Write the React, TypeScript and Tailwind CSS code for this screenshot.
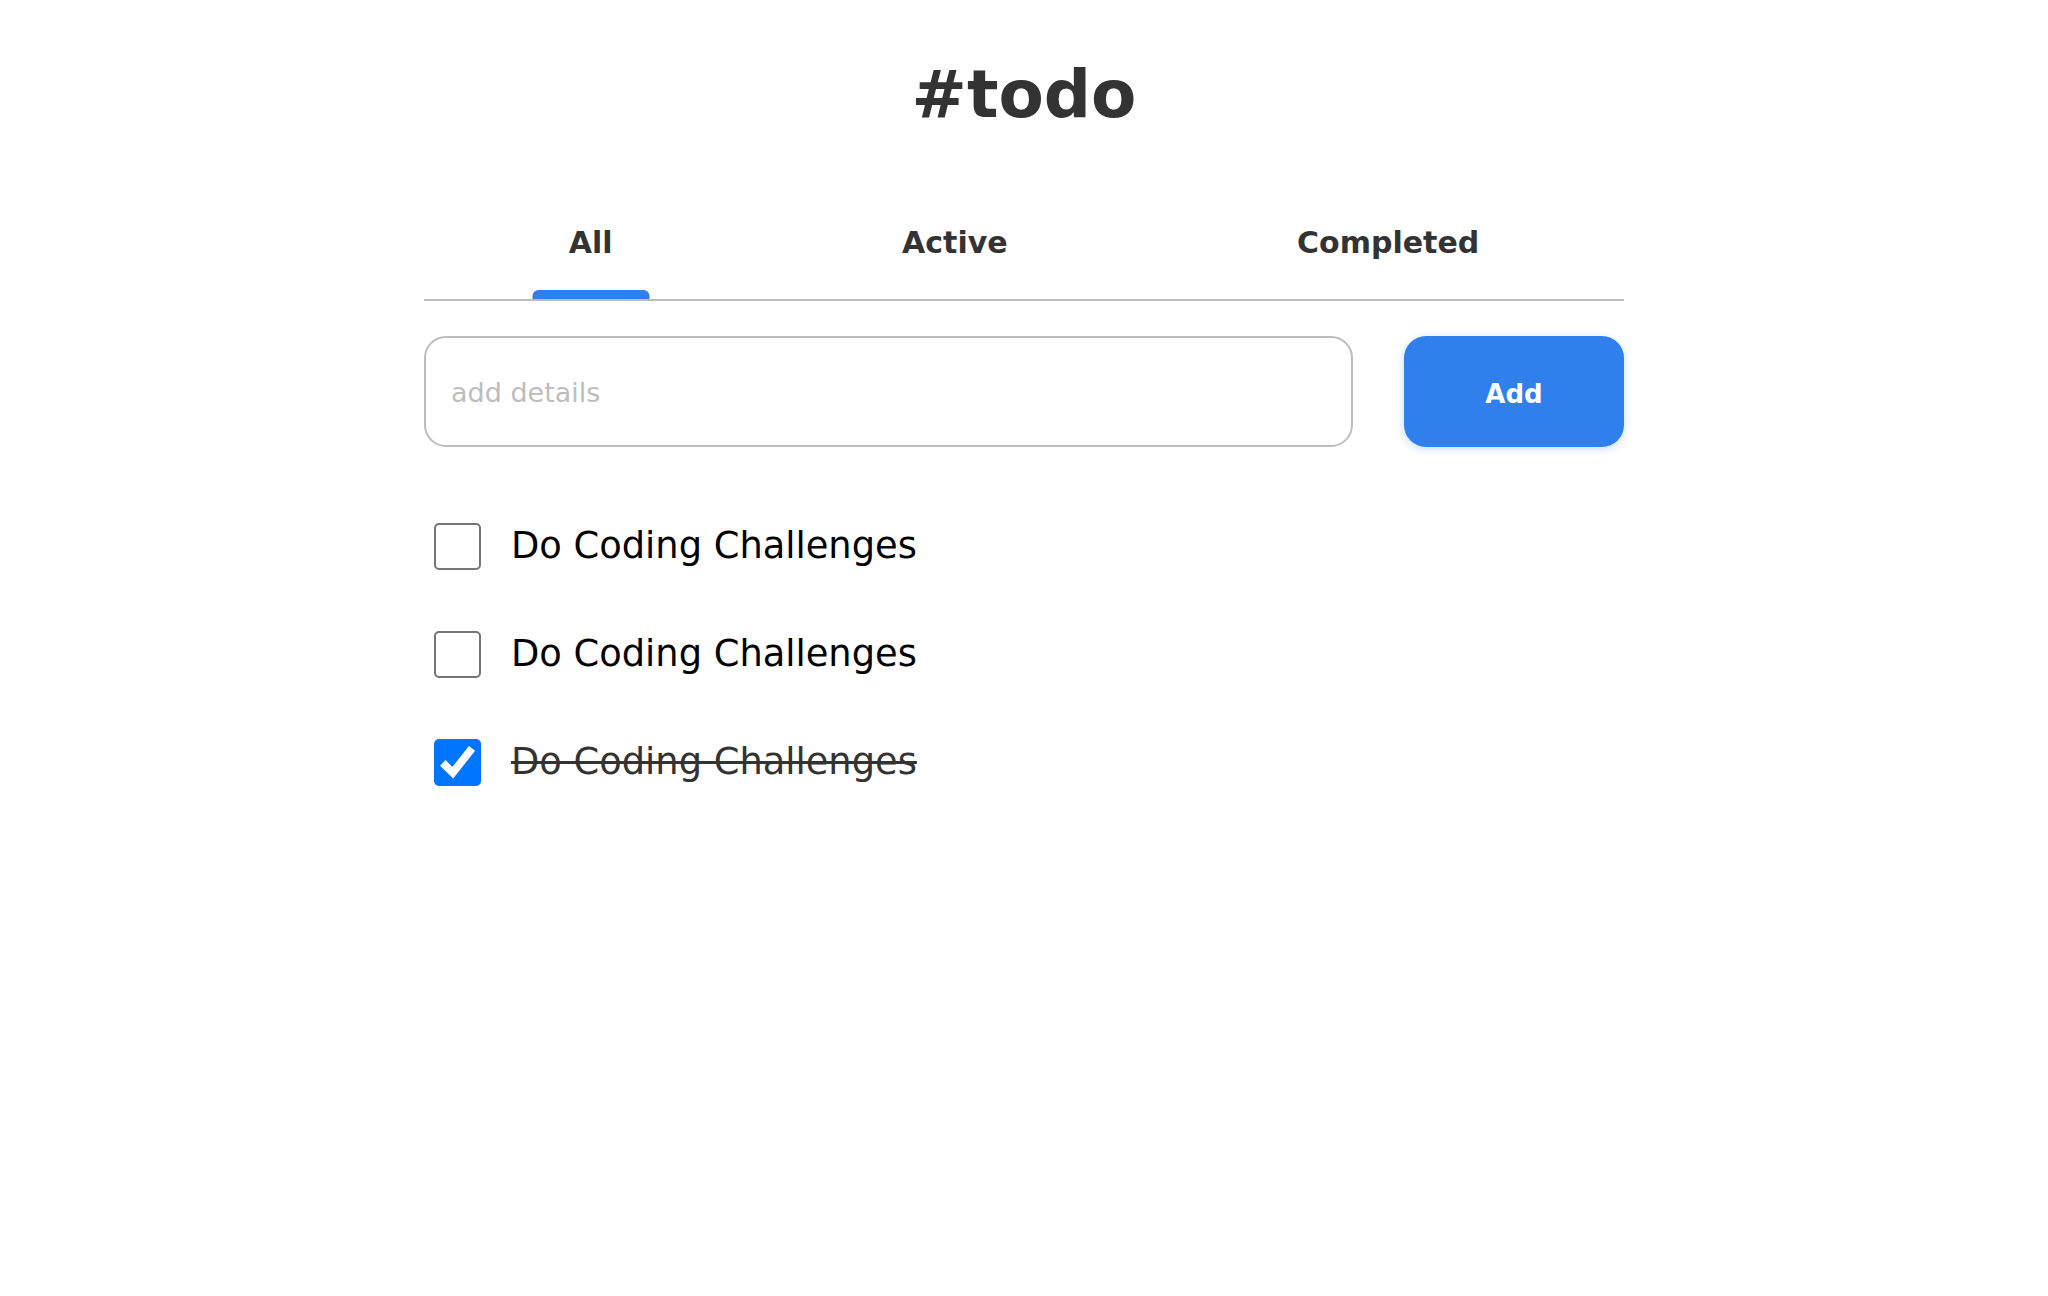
import { useState } from "react";

interface Todo {
  id: number;
  text: string;
  done: boolean;
}

const tabs = ["All", "Active", "Completed"];

export default function App() {
  const [active, setActive] = useState("All");
  const [todos, setTodos] = useState<Todo[]>([
    { id: 1, text: "Do Coding Challenges", done: false },
    { id: 2, text: "Do Coding Challenges", done: false },
    { id: 3, text: "Do Coding Challenges", done: true },
  ]);

  const toggle = (id: number) =>
    setTodos((prev) => prev.map((t) => (t.id === id ? { ...t, done: !t.done } : t)));

  return (
    <div className="min-h-screen bg-white font-['DejaVu_Sans',sans-serif]">
      <div className="mx-auto w-[1200px]">
        {/* Title */}
        <h1 className="pt-[62px] text-center text-[66px] font-bold leading-none text-[#333333]">
          #todo
        </h1>

        {/* Tabs */}
        <div className="mt-[100px] flex justify-around border-b-2 border-[#BDBDBD]">
          {tabs.map((tab) => (
            <button
              key={tab}
              onClick={() => setActive(tab)}
              className="relative pb-[41px] text-[30px] font-semibold leading-none text-[#333333]"
            >
              {tab}
              {active === tab && (
                <span className="absolute bottom-0 left-1/2 h-[9px] w-[117px] -translate-x-1/2 rounded-t-[6px] bg-[#2F80ED]" />
              )}
            </button>
          ))}
        </div>

        {/* Input row */}
        <div className="mt-[35px] flex gap-[51px]">
          <input
            placeholder="add details"
            className="h-[111px] flex-1 rounded-[22px] border-2 border-[#BDBDBD] px-[25px] pt-[2px] text-[27px] text-[#333333] outline-none placeholder:text-[#BDBDBD]"
          />
          <button className="h-[111px] w-[220px] rounded-[22px] bg-[#2F80ED] pt-[5px] text-[26px] font-semibold text-white shadow-[0_2px_8px_rgba(127,177,243,0.45)]">
            Add
          </button>
        </div>

        {/* List */}
        <ul className="mt-[76px] flex flex-col gap-[62px] pl-[10px]">
          {todos.map((todo) => (
            <li key={todo.id} className="flex h-[46px] items-center gap-[30px]">
              <button
                onClick={() => toggle(todo.id)}
                className={
                  todo.done
                    ? "flex h-[47px] w-[47px] items-center justify-center rounded-[5px] bg-[#0075FF]"
                    : "h-[47px] w-[47px] rounded-[5px] border-2 border-[#767676] bg-white"
                }
              >
                {todo.done && (
                  <svg viewBox="0 0 24 24" className="h-[47px] w-[47px]">
                    <polyline
                      points="4.5,12.2 9.6,17.2 19.4,4.8"
                      fill="none"
                      stroke="white"
                      strokeWidth="4"
                      strokeLinejoin="miter"
                    />
                  </svg>
                )}
              </button>
              <span
                className={
                  todo.done
                    ? "text-[36.8px] leading-none text-[#333333] line-through"
                    : "text-[36.8px] leading-none text-black"
                }
              >
                {todo.text}
              </span>
            </li>
          ))}
        </ul>
      </div>
    </div>
  );
}
